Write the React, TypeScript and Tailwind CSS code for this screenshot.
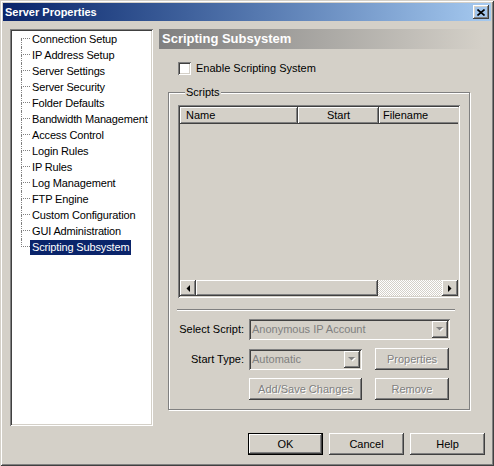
import React from "react";

// win2k style bevels
const raised =
  "shadow-[inset_-1px_-1px_0_#404040,inset_1px_1px_0_#ffffff,inset_-2px_-2px_0_#808080,inset_2px_2px_0_#d4d0c8]";
const sunken =
  "shadow-[inset_1px_1px_0_#808080,inset_-1px_-1px_0_#ffffff,inset_2px_2px_0_#404040,inset_-2px_-2px_0_#d4d0c8]";
const disabledText = "text-[#808080] [text-shadow:1px_1px_0_#ffffff]";

const pages = [
  "Connection Setup",
  "IP Address Setup",
  "Server Settings",
  "Server Security",
  "Folder Defaults",
  "Bandwidth Management",
  "Access Control",
  "Login Rules",
  "IP Rules",
  "Log Management",
  "FTP Engine",
  "Custom Configuration",
  "GUI Administration",
  "Scripting Subsystem",
];

function TreeRow({
  label,
  first,
  last,
  selected,
}: {
  label: string;
  first: boolean;
  last: boolean;
  selected: boolean;
}) {
  return (
    <div className="flex h-4 items-stretch">
      <div className="flex w-[9px] shrink-0 flex-col">
        <div
          className={`h-2 border-b border-dotted border-[#808080] ${first ? "" : "border-l"}`}
        />
        <div className={`flex-1 border-dotted border-[#808080] ${last ? "" : "border-l"}`} />
      </div>
      <div className="flex items-center">
        <span
          className={`flex h-[15px] items-center whitespace-nowrap px-[2px] tracking-[-0.15px] ${
            selected ? "bg-[#0a246a] text-white" : "text-black"
          }`}
        >
          {label}
        </span>
      </div>
    </div>
  );
}

function DownArrow({ disabled }: { disabled?: boolean }) {
  return (
    <svg width="8" height="5" viewBox="0 0 8 5">
      {disabled && <path d="M1 1h7L4.5 4.5z" fill="#ffffff" />}
      <path d="M0 0h7L3.5 3.5z" fill={disabled ? "#808080" : "#000000"} />
    </svg>
  );
}

function Combo({ text, width }: { text: string; width: string }) {
  return (
    <div className={`flex h-[21px] items-center bg-[#d4d0c8] p-[2px] ${sunken} ${width}`}>
      <span className="flex-1 truncate pl-[1px] text-[#808080]">{text}</span>
      <div className={`flex h-[17px] w-4 items-center justify-center ${raised}`}>
        <DownArrow disabled />
      </div>
    </div>
  );
}

function Button({
  label,
  disabled,
  isDefault,
  width = "w-[74px]",
}: {
  label: string;
  disabled?: boolean;
  isDefault?: boolean;
  width?: string;
}) {
  if (isDefault) {
    return (
      <div className={`h-[22px] border border-black ${width}`}>
        <div className={`flex h-full items-center justify-center ${raised}`}>{label}</div>
      </div>
    );
  }
  return (
    <div
      className={`flex h-[22px] items-center justify-center whitespace-nowrap ${raised} ${width} ${
        disabled ? disabledText : "text-black"
      }`}
    >
      {label}
    </div>
  );
}

function ScrollArrow({ dir }: { dir: "left" | "right" }) {
  return (
    <div className={`flex h-4 w-4 items-center justify-center ${raised}`}>
      <svg width="4" height="7" viewBox="0 0 4 7">
        <path d={dir === "left" ? "M4 0v7L0.5 3.5z" : "M0 0v7L3.5 3.5z"} fill="#000000" />
      </svg>
    </div>
  );
}

function ListView() {
  return (
    <div className={`flex h-[193px] w-[282px] flex-col p-[2px] ${sunken}`}>
      <div className="flex h-[17px] overflow-hidden">
        <div className={`flex w-[118px] shrink-0 items-center pl-[6px] ${raised}`}>Name</div>
        <div className={`flex w-[81px] shrink-0 items-center justify-center ${raised}`}>Start</div>
        <div className={`flex w-[100px] shrink-0 items-center pl-[4px] ${raised}`}>Filename</div>
      </div>
      <div className="flex-1" />
      <div className="flex h-4">
        <ScrollArrow dir="left" />
        <div className={`h-4 w-[182px] ${raised}`} />
        <div className="h-4 flex-1 bg-[repeating-conic-gradient(#ffffff_0%_25%,#d4d0c8_0%_50%)] bg-[length:2px_2px]" />
        <ScrollArrow dir="right" />
      </div>
    </div>
  );
}

export default function App() {
  return (
    <div className="h-[466px] w-[494px] bg-[#d4d0c8] font-['Liberation_Sans',Arial,sans-serif] text-[11px] text-black">
      <div
        className={`flex h-full w-full flex-col p-[3px] shadow-[inset_1px_1px_0_#d4d0c8,inset_-1px_-1px_0_#404040,inset_2px_2px_0_#ffffff,inset_-2px_-2px_0_#808080]`}
      >
        {/* title bar */}
        <div className="flex h-[18px] items-center bg-linear-to-r from-[#0a246a] to-[#a6caf0] pl-[2px] pr-[2px]">
          <span className="flex-1 font-bold text-white">Server Properties</span>
          <div className={`flex h-[14px] w-4 items-center justify-center ${raised}`}>
            <svg width="8" height="7" viewBox="0 0 8 7">
              <path d="M0.5 0.5l7 6M7.5 0.5l-7 6" stroke="#000000" strokeWidth="1.6" />
            </svg>
          </div>
        </div>

        <div className="flex flex-1 flex-col pl-[7px] pr-[6px] pt-[8px]">
          <div className="flex h-[397px] gap-[6px]">
            {/* page tree */}
            <div className={`h-full w-[143px] shrink-0 overflow-hidden bg-white p-[2px] pl-[11px] ${sunken}`}>
              {pages.map((p, i) => (
                <TreeRow
                  key={p}
                  label={p}
                  first={i === 0}
                  last={i === pages.length - 1}
                  selected={i === pages.length - 1}
                />
              ))}
            </div>

            {/* page */}
            <div className="flex w-[323px] flex-col">
              <div className="flex h-5 items-center bg-linear-to-r from-[#808080] to-[#d4d0c8] pl-[3px] text-[13px] font-bold text-white">
                Scripting Subsystem
              </div>

              <div className="ml-[19px] mt-[13px] flex h-[13px] items-center">
                <div className={`h-[13px] w-[13px] bg-white ${sunken}`} />
                <span className="ml-[5px]">Enable Scripting System</span>
              </div>

              <fieldset className="ml-[9px] mt-[11px] w-[302px] min-w-0 border border-[#808080] px-[9px] pb-[9px] pt-[6px] shadow-[1px_1px_0_#ffffff,inset_1px_1px_0_#ffffff]">
                <legend className="ml-[7px] bg-[#d4d0c8] px-[1px] leading-[13px]">Scripts</legend>
                <ListView />

                <div className="-ml-px mt-[11px] h-[2px] w-[278px] border-b border-t border-b-white border-t-[#808080]" />

                <div className="mt-[8px] flex h-[21px] items-center">
                  <span className="w-[66px] whitespace-nowrap text-right">Select Script:</span>
                  <div className="ml-[5px]">
                    <Combo text="Anonymous IP Account" width="w-[201px]" />
                  </div>
                </div>

                <div className="mt-[8px] flex h-[22px] items-center">
                  <span className="w-[66px] whitespace-nowrap text-right">Start Type:</span>
                  <div className="ml-[5px]">
                    <Combo text="Automatic" width="w-[113px]" />
                  </div>
                  <div className="ml-[13px]">
                    <Button label="Properties" disabled />
                  </div>
                </div>

                <div className="mt-[8px] flex h-[22px] items-center pl-[71px]">
                  <Button label="Add/Save Changes" disabled width="w-[113px]" />
                  <div className="ml-[13px]">
                    <Button label="Remove" disabled />
                  </div>
                </div>
              </fieldset>
            </div>
          </div>

          {/* dialog buttons */}
          <div className="mt-[7px] flex justify-end gap-[6px]">
            <Button label="OK" isDefault width="w-[75px]" />
            <Button label="Cancel" width="w-[75px]" />
            <Button label="Help" width="w-[75px]" />
          </div>
        </div>
      </div>
    </div>
  );
}
